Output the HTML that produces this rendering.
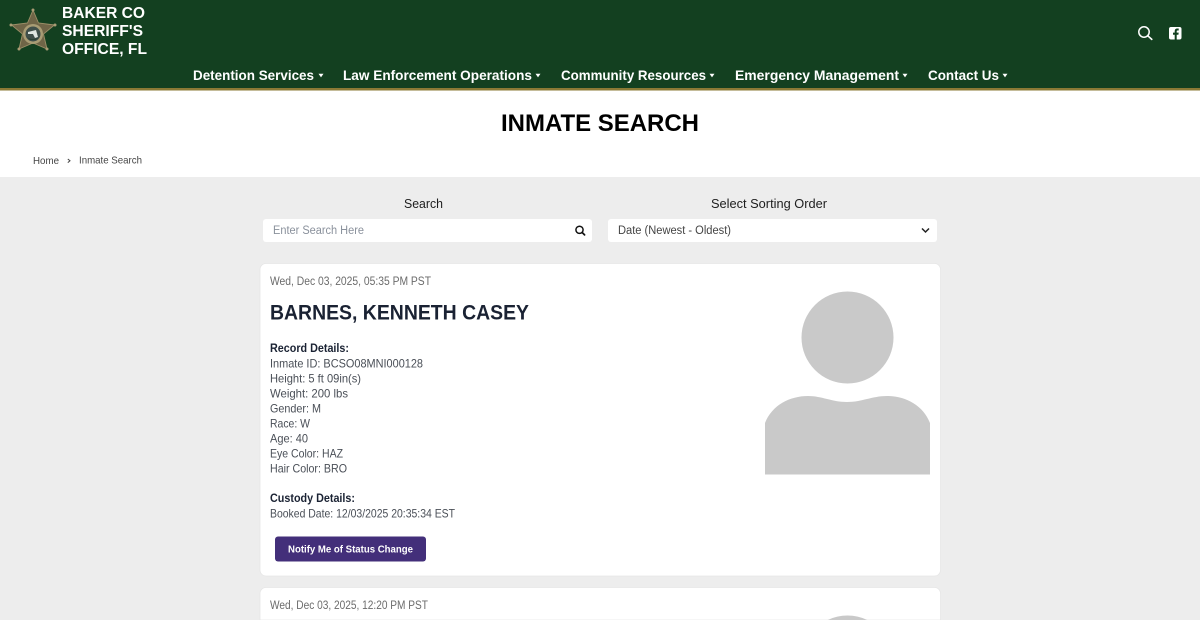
<!DOCTYPE html>
<html lang="en">
<head>
<meta charset="utf-8">
<title>Inmate Search</title>
<style>
html,body{margin:0;padding:0;width:1200px;height:620px;overflow:hidden;background:#ededed}
svg{display:block}
text{font-family:"Liberation Sans",sans-serif}
.b{font-weight:700}
.body{font-size:12px;fill:#4a4f57}
.nav{font-size:14px;font-weight:700;fill:#fff}
</style>
</head>
<body>
<svg width="1200" height="620" viewBox="0 0 1200 620" xmlns="http://www.w3.org/2000/svg">
<rect width="1200" height="620" fill="#ededed"/>
<rect width="1200" height="177" fill="#fff"/>
<rect width="1200" height="88" fill="#134020"/>
<rect y="88" width="1200" height="2.500" fill="#8b7a35"/>

<!-- badge -->
<g transform="translate(33,33)">
<path d="M0-23 L5.500-10 L21.500-8 L10.500 1 L14 16 L0 10 L-14 16 L-10.500 1 L-21.500-8 L-5.500-10Z" fill="#6f6547" stroke="#9c9068" stroke-width=".9"/>
<circle cy="-23" r="1.500" fill="#a89c74"/><circle cx="-22" cy="-8" r="1.500" fill="#a89c74"/><circle cx="22" cy="-8" r="1.500" fill="#a89c74"/><circle cx="-14" cy="16" r="1.500" fill="#a89c74"/><circle cx="14" cy="16" r="1.500" fill="#a89c74"/>
<circle cy="1" r="10" fill="#a89c74"/>
<circle cy="1" r="7.500" fill="#3f4f4a"/>
<path d="M-5-1 L3-3 L5 4 L2 5 L0 1 L-5 1Z" fill="#dfe6e2"/>
<path d="M-6 4 Q0 8 6 4 L3 7 L-3 7Z" fill="#2a4034"/>
</g>

<text class="b" x="62" y="18" font-size="16" fill="#fff" textLength="83" lengthAdjust="spacingAndGlyphs">BAKER CO</text>
<text class="b" x="62" y="36" font-size="16" fill="#fff" textLength="81" lengthAdjust="spacingAndGlyphs">SHERIFF'S</text>
<text class="b" x="62" y="54" font-size="16" fill="#fff" textLength="85" lengthAdjust="spacingAndGlyphs">OFFICE, FL</text>

<!-- nav -->
<text class="nav" x="193" y="80" textLength="121" lengthAdjust="spacingAndGlyphs">Detention Services</text>
<path d="M318.500 73.800h5l-2.500 3.600z" fill="#fff"/>
<text class="nav" x="343" y="80" textLength="189" lengthAdjust="spacingAndGlyphs">Law Enforcement Operations</text>
<path d="M535.500 73.800h5l-2.500 3.600z" fill="#fff"/>
<text class="nav" x="561" y="80" textLength="145" lengthAdjust="spacingAndGlyphs">Community Resources</text>
<path d="M709.500 73.800h5l-2.500 3.600z" fill="#fff"/>
<text class="nav" x="735" y="80" textLength="164" lengthAdjust="spacingAndGlyphs">Emergency Management</text>
<path d="M902.500 73.800h5l-2.500 3.600z" fill="#fff"/>
<text class="nav" x="928" y="80" textLength="71" lengthAdjust="spacingAndGlyphs">Contact Us</text>
<path d="M1002.500 73.800h5l-2.500 3.600z" fill="#fff"/>

<!-- header icons -->
<circle cx="1144" cy="32" r="5.200" fill="none" stroke="#fff" stroke-width="1.500"/>
<path d="M1147.800 35.800L1151.800 39.400" stroke="#fff" stroke-width="1.600" stroke-linecap="round"/>
<rect x="1169" y="27" width="12.500" height="12.500" rx="2" fill="#fff"/>
<path d="M1174.700 39.500v-4.800h-1.700v-2.100h1.700v-1.500c0-1.700 1-2.600 2.500-2.600h1.500v2h-1c-.8 0-1 .3-1 1v1.100h2l-.3 2.100h-1.700v4.800z" fill="#134020"/>

<!-- title -->
<text class="b" x="501" y="131" font-size="24" fill="#000" textLength="198" lengthAdjust="spacingAndGlyphs">INMATE SEARCH</text>

<!-- breadcrumb -->
<text x="33" y="164" font-size="10.500" fill="#444" textLength="26" lengthAdjust="spacingAndGlyphs">Home</text>
<path d="M67.800 159l2.200 1.800-2.200 1.800" fill="none" stroke="#444" stroke-width="1"/>
<text x="79" y="163.500" font-size="10.500" fill="#444" textLength="63" lengthAdjust="spacingAndGlyphs">Inmate Search</text>

<!-- search labels -->
<text x="404" y="208" font-size="13" fill="#1d1d1d" textLength="39" lengthAdjust="spacingAndGlyphs">Search</text>
<text x="711" y="208" font-size="13" fill="#1d1d1d" textLength="116" lengthAdjust="spacingAndGlyphs">Select Sorting Order</text>

<!-- inputs -->
<rect x="263" y="219" width="329" height="23" rx="3" fill="#fff"/>
<text x="273" y="234" font-size="11.500" fill="#8a919c" textLength="91" lengthAdjust="spacingAndGlyphs">Enter Search Here</text>
<circle cx="579.500" cy="229.800" r="3.600" fill="none" stroke="#111" stroke-width="1.500"/>
<path d="M582.200 232.500L584.600 234.900" stroke="#111" stroke-width="1.700" stroke-linecap="round"/>

<rect x="608" y="219" width="329" height="23" rx="3" fill="#fff"/>
<text x="618" y="234" font-size="11.500" fill="#444" textLength="113" lengthAdjust="spacingAndGlyphs">Date (Newest - Oldest)</text>
<path d="M922 228.500l3.500 3.500 3.500-3.500" fill="none" stroke="#222" stroke-width="1.500"/>

<!-- card 1 -->
<rect x="260" y="263.500" width="680.500" height="312.500" rx="6" fill="#fff" stroke="#e6e6e6" stroke-width=".8"/>
<text x="270" y="285" font-size="11.500" fill="#6b6b6b" textLength="161" lengthAdjust="spacingAndGlyphs">Wed, Dec 03, 2025, 05:35 PM PST</text>
<text class="b" x="270" y="319.500" font-size="21.500" fill="#1a2233" textLength="259" lengthAdjust="spacingAndGlyphs">BARNES, KENNETH CASEY</text>

<text class="b" x="270" y="352" font-size="12" fill="#1a2233" textLength="79" lengthAdjust="spacingAndGlyphs">Record Details:</text>
<text class="body" x="270" y="367.500" textLength="153" lengthAdjust="spacingAndGlyphs">Inmate ID: BCSO08MNI000128</text>
<text class="body" x="270" y="382.500" textLength="91" lengthAdjust="spacingAndGlyphs">Height: 5 ft 09in(s)</text>
<text class="body" x="270" y="397.500" textLength="78" lengthAdjust="spacingAndGlyphs">Weight: 200 lbs</text>
<text class="body" x="270" y="412.500" textLength="51" lengthAdjust="spacingAndGlyphs">Gender: M</text>
<text class="body" x="270" y="427.500" textLength="40" lengthAdjust="spacingAndGlyphs">Race: W</text>
<text class="body" x="270" y="442.500" textLength="38" lengthAdjust="spacingAndGlyphs">Age: 40</text>
<text class="body" x="270" y="457.500" textLength="73" lengthAdjust="spacingAndGlyphs">Eye Color: HAZ</text>
<text class="body" x="270" y="472.500" textLength="77" lengthAdjust="spacingAndGlyphs">Hair Color: BRO</text>

<text class="b" x="270" y="502" font-size="12" fill="#1a2233" textLength="85" lengthAdjust="spacingAndGlyphs">Custody Details:</text>
<text class="body" x="270" y="517.500" textLength="185" lengthAdjust="spacingAndGlyphs">Booked Date: 12/03/2025 20:35:34 EST</text>

<rect x="275" y="536.500" width="151" height="25" rx="3" fill="#432f7a"/>
<text class="b" x="288" y="552.500" font-size="10.500" fill="#fff" textLength="125" lengthAdjust="spacingAndGlyphs">Notify Me of Status Change</text>

<!-- avatar -->
<circle cx="847.500" cy="337.500" r="46" fill="#c9c9c9"/>
<path d="M765 423C772 405 790 396 808 396C822 396 832 402 847 402C862 402 872 396 887 396C905 396 923 405 930 423V474.500H765Z" fill="#c9c9c9"/>

<!-- card 2 -->
<path d="M260 620V593.500a6 6 0 0 1 6-6H934.500a6 6 0 0 1 6 6V620Z" fill="#fff" stroke="#e6e6e6" stroke-width=".8"/>
<text x="270" y="609" font-size="11.500" fill="#6b6b6b" textLength="158" lengthAdjust="spacingAndGlyphs">Wed, Dec 03, 2025, 12:20 PM PST</text>
<path d="M827.700 620A46 46 0 0 1 867.300 620Z" fill="#c9c9c9"/>
</svg>
</body>
</html>
